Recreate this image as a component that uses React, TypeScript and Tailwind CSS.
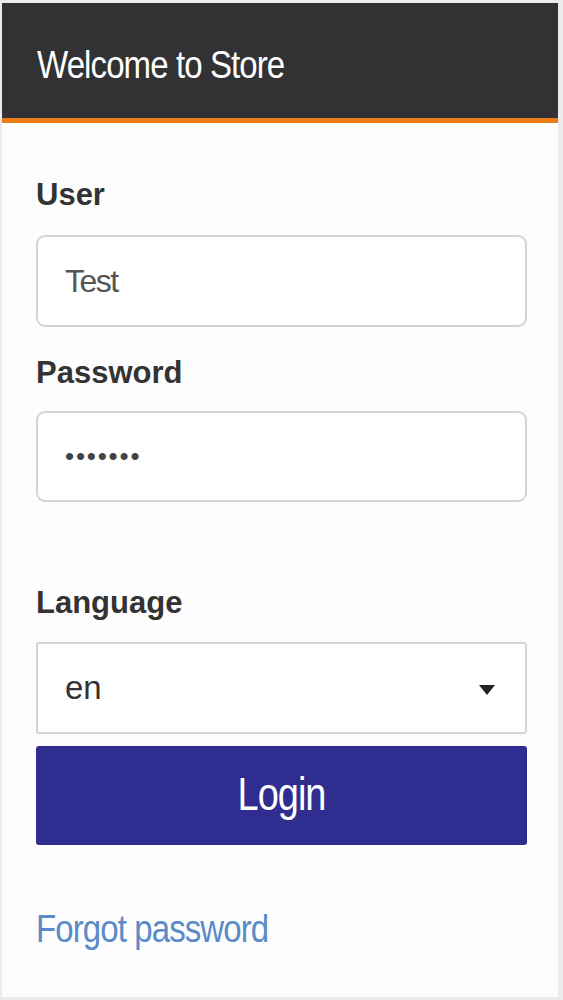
import { useState } from 'react';

const App = () => {
  const [user, setUser] = useState('Test');
  const [password, setPassword] = useState('1234567');
  const [lang, setLang] = useState('en');

  return (
    <div className="h-[1000px] w-[563px] bg-[#ececec] pt-[3px] pl-[2px] pr-[5px] pb-[3px] font-['Liberation_Sans',Arial,sans-serif]">
      <div className="flex h-full flex-col bg-[#fdfdfd]">
        <div className="flex h-[120px] shrink-0 items-center border-b-[5px] border-[#f07b1a] bg-[#323234] px-[35px] pt-[9px]">
          <h1 className="inline-block scale-y-[1.2] text-[33px] tracking-[-0.9px] text-white">Welcome to Store</h1>
        </div>

        <form className="flex flex-col px-[34px]" onSubmit={(e) => e.preventDefault()}>
          <label className="mt-[54px] text-[31px] font-bold leading-[36px] text-[#333]">User</label>
          <input
            value={user}
            onChange={(e) => setUser(e.target.value)}
            className="mt-[22px] h-[92px] w-[491px] rounded-[9px] border-2 border-[#d4d4d4] bg-white px-[27px] text-[32px] tracking-[-1.5px] text-[#555] outline-none"
          />

          <label className="mt-[28px] text-[31px] font-bold leading-[36px] text-[#333]">Password</label>
          <input
            type="password"
            value={password}
            onChange={(e) => setPassword(e.target.value)}
            className="mt-[20px] h-[91px] w-[491px] rounded-[9px] border-2 border-[#d4d4d4] bg-white px-[27px] text-[26px] tracking-[1.8px] text-[#444] outline-none"
          />

          <label className="mt-[83px] text-[31px] font-bold leading-[36px] text-[#333]">Language</label>
          <div className="relative mt-[21px] w-[491px]">
            <select
              value={lang}
              onChange={(e) => setLang(e.target.value)}
              className="h-[92px] w-full appearance-none rounded-[3px] border-2 border-[#d4d4d4] bg-white px-[27px] text-[33px] text-[#333] outline-none"
            >
              <option value="en">en</option>
              <option value="de">de</option>
            </select>
            <svg className="pointer-events-none absolute right-[32px] top-[43px]" width="16" height="10" viewBox="0 0 16 10">
              <path d="M0 0h16L8 10z" fill="#222" />
            </svg>
          </div>

          <button
            type="submit"
            className="mt-[12px] h-[99px] w-[491px] rounded-[3px] bg-[#2f2d8f] text-white"
          >
            <span className="inline-block scale-y-[1.2] text-[38px] tracking-[-1px]">Login</span>
          </button>

          <a href="#" className="mt-[64px] self-start">
            <span className="inline-block scale-y-[1.2] text-[33px] leading-[40px] tracking-[-0.9px] text-[#5b8bc7]">
              Forgot password
            </span>
          </a>
        </form>
      </div>
    </div>
  );
};

export default App;
